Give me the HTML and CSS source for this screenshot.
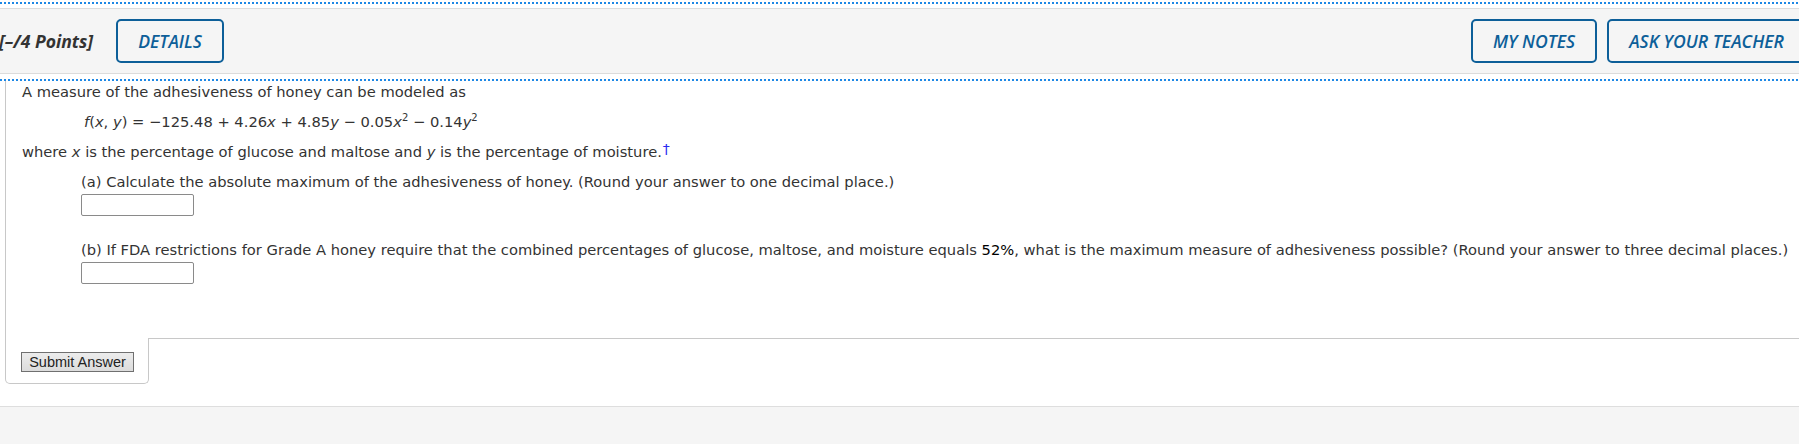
FILE: index.html
```html
<!DOCTYPE html>
<html>
<head>
<meta charset="utf-8">
<link rel="stylesheet" href="styles.css">
</head>
<body>
<div class="page">
  <div class="dotline top"></div>
  <div class="qhead">
    <div class="qhead-left">
      <span class="points">[–/4 Points]</span>
      <button class="hbtn">DETAILS</button>
    </div>
    <div class="qhead-right">
      <button class="hbtn">MY NOTES</button>
      <button class="hbtn">ASK YOUR TEACHER</button>
    </div>
  </div>
  <div class="dotline mid"></div>
  <div class="qbody">
    <p class="line first">A measure of the adhesiveness of honey can be modeled as</p>
    <p class="line formula"><i>f</i>(<i>x</i>, <i>y</i>) = −125.48 + 4.26<i>x</i> + 4.85<i>y</i> − 0.05<i>x</i><sup>2</sup> − 0.14<i>y</i><sup>2</sup></p>
    <p class="line">where <i>x</i> is the percentage of glucose and maltose and <i>y</i> is the percentage of moisture.<sup class="dagger">†</sup></p>
    <div class="part">
      <p class="line">(a) Calculate the absolute maximum of the adhesiveness of honey. (Round your answer to one decimal place.)</p>
      <input class="answer" type="text">
    </div>
    <div class="part partb">
      <p class="line">(b) If FDA restrictions for Grade A honey require that the combined percentages of glucose, maltose, and moisture equals <span class="tag">52%</span>, what is the maximum measure of adhesiveness possible? (Round your answer to three decimal places.)</p>
      <input class="answer" type="text">
    </div>
  </div>
  <div class="submit-row">
    <div class="submit-cell"><button class="submit">Submit Answer</button></div>
    <div class="submit-fill"></div>
  </div>
</div>
<div class="footer"></div>
</body>
</html>
```
FILE: styles.css
```css
html, body {
  margin: 0;
  padding: 0;
  background: #fff;
  overflow: hidden;
}
body {
  width: 1799px;
  height: 444px;
  font-family: "DejaVu Sans", Verdana, sans-serif;
  color: #333;
}
.page {
  width: 1810px;
}
.dotline {
  border-top: 2px dotted #1e88e5;
  height: 0;
}
.dotline.top {
  margin-top: 2px;
}
.qhead {
  margin-top: 4px;
  height: 64px;
  border-top: 1px solid #dcdcdc;
  border-bottom: 1px solid #dcdcdc;
  background: #f5f5f5;
  display: flex;
  align-items: center;
  justify-content: space-between;
}
.qhead-left, .qhead-right {
  display: flex;
  align-items: center;
}
.qhead-right {
  gap: 10px;
  margin-right: 4px;
}
.points {
  font-family: "Open Sans", sans-serif;
  font-weight: 700;
  font-style: italic;
  font-size: 17.6px;
  color: #333;
  margin-left: -1px;
  margin-right: 23px;
}
.hbtn {
  height: 44px;
  padding: 0 20px;
  border: 2px solid #0d5f99;
  border-radius: 5px;
  background: #f5f5f5;
  color: #0d5f99;
  font-family: "Open Sans", sans-serif;
  font-weight: 600;
  font-style: italic;
  font-size: 17.6px;
}
.dotline.mid {
  margin-top: 5px;
}
.qbody {
  margin-left: 5px;
  border-left: 1px solid #c8c8c8;
  padding: 1px 0 0 16px;
  height: 257px;
  box-sizing: border-box;
}
.line {
  margin: 0;
  font-size: 14.7px;
  line-height: 20px;
  white-space: nowrap;
}
.formula {
  margin-top: 10px;
  padding-left: 62px;
}
.formula + .line {
  margin-top: 10px;
}
sup {
  font-size: 10px;
  line-height: 0;
  vertical-align: 6px;
}
.dagger {
  color: #2a2af0;
  font-size: 14px;
  vertical-align: 3px;
  margin-left: 1px;
}
.tag {
  color: #000;
}
.part {
  padding-left: 59px;
  margin-top: 10px;
}
.partb {
  margin-top: 24px;
}
.answer {
  display: block;
  box-sizing: border-box;
  width: 113px;
  height: 22px;
  margin: 2px 0 0 0;
  border: 1px solid #8a8a8a;
  border-radius: 2px;
  background: #fff;
  padding: 0;
}
.submit-row {
  display: flex;
  height: 46px;
}
.submit-cell {
  margin-left: 5px;
  width: 144px;
  box-sizing: border-box;
  border: 1px solid #c8c8c8;
  border-top: none;
  border-radius: 0 0 5px 5px;
  padding: 14px 0 0 15px;
}
.submit-fill {
  flex: 1;
  border-top: 1px solid #c8c8c8;
}
.submit {
  display: block;
  width: 113px;
  height: 20px;
  box-sizing: border-box;
  border: 1px solid #707070;
  background: linear-gradient(#ececec, #dcdcdc);
  font-family: "Liberation Sans", Arial, sans-serif;
  font-size: 14.5px;
  color: #222;
  padding: 0;
  line-height: 18px;
}
.footer {
  margin-top: 22px;
  height: 40px;
  border-top: 1px solid #dedede;
  background: #f5f5f5;
}
```
